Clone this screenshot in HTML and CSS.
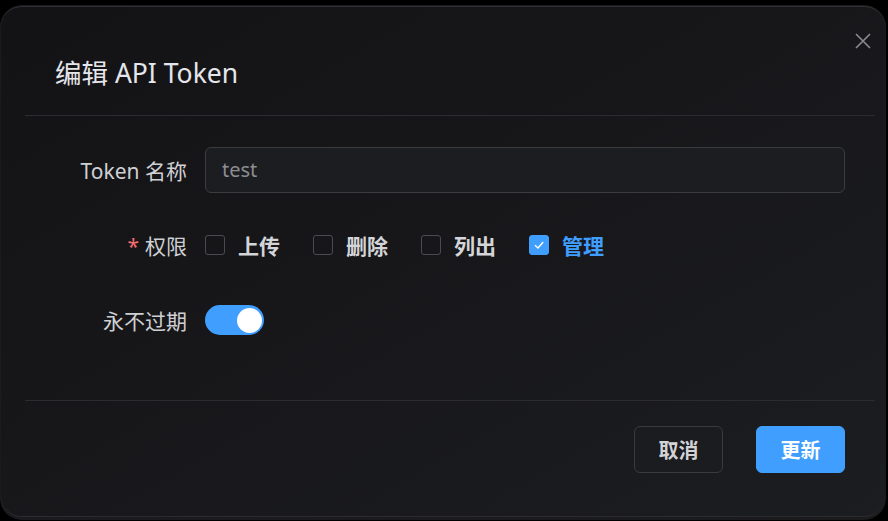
FILE: index.html
```html
<!DOCTYPE html>
<html lang="zh-CN">
<head>
<meta charset="utf-8">
<title>编辑 API Token</title>
<link rel="stylesheet" href="styles.css">
</head>
<body>
<div class="dialog">
  <div class="frame">
    <button class="close" aria-label="关闭">
      <svg width="16" height="16" viewBox="0 0 16 16"><path d="M1 1L15 15M15 1L1 15" stroke="#8b8b90" stroke-width="1.6" fill="none"/></svg>
    </button>
    <div class="header">
      <h2 class="title">编辑 API Token</h2>
    </div>
    <div class="body">
      <div class="row">
        <label class="label">Token 名称</label>
        <div class="control">
          <div class="input">test</div>
        </div>
      </div>
      <div class="row">
        <label class="label"><span class="req">*</span>权限</label>
        <div class="control checks">
          <span class="check"><span class="box"></span><span class="ctext">上传</span></span>
          <span class="check"><span class="box"></span><span class="ctext">删除</span></span>
          <span class="check"><span class="box"></span><span class="ctext">列出</span></span>
          <span class="check on"><span class="box"><svg width="14" height="14" viewBox="0 0 14 14"><path d="M3 7.2L6 10L11.2 4" stroke="#fff" stroke-width="1.4" fill="none"/></svg></span><span class="ctext">管理</span></span>
        </div>
      </div>
      <div class="row">
        <label class="label">永不过期</label>
        <div class="control">
          <span class="switch"><span class="knob"></span></span>
        </div>
      </div>
    </div>
    <div class="footer">
      <button class="btn cancel">取消</button>
      <button class="btn primary">更新</button>
    </div>
  </div>
</div>
</body>
</html>
```
FILE: styles.css
```css
html, body {
  margin: 0;
  padding: 0;
  background: #000;
  width: 888px;
  height: 521px;
  overflow: hidden;
  font-family: "Noto Sans", "Noto Sans CJK SC", sans-serif;
}
.dialog {
  margin-top: 5px;
  width: 886px;
  height: 515px;
  box-sizing: border-box;
  border-radius: 22px;
  background: #1b1b1e;
  padding: 1px 1px 3px 1px;
}
.frame {
  position: relative;
  box-sizing: border-box;
  height: 100%;
  border-radius: 21px;
  border-top: 1px solid #303034;
  border-bottom: 1px solid #2c2c30;
  background: linear-gradient(150deg, #131316 0%, #17171a 45%, #1c1d20 100%);
  padding: 0 10px 0 24px;
  display: flex;
  flex-direction: column;
}
.close {
  position: absolute;
  top: 26px;
  right: 14px;
  width: 16px;
  height: 16px;
  padding: 0;
  border: 0;
  background: none;
  display: flex;
}
.header {
  padding: 50px 30px 26px;
  border-bottom: 1px solid #2c2c30;
}
.title {
  margin: 0;
  font-size: 26.5px;
  line-height: 32px;
  font-weight: 400;
  color: #e4e6eb;
}
.body {
  padding: 31px 0 57px;
  display: flex;
  flex-direction: column;
  gap: 29px;
  border-bottom: 1px solid #2c2c30;
}
.row {
  display: flex;
  align-items: center;
  height: 46px;
}
.label {
  width: 180px;
  box-sizing: border-box;
  padding-right: 18px;
  text-align: right;
  font-size: 21px;
  color: #cfd0d4;
}
.req {
  color: #f56c6c;
  margin-right: 6px;
}
.control {
  flex: 1;
  padding-right: 30px;
  display: flex;
  align-items: center;
}
.input {
  flex: 1;
  height: 46px;
  box-sizing: border-box;
  border: 1px solid #3b3c40;
  border-radius: 6px;
  background: #1c1d20;
  padding-left: 16px;
  font-size: 20px;
  line-height: 44px;
  color: #8c8d92;
}
.checks {
  gap: 0;
}
.check {
  display: flex;
  align-items: center;
  width: 108px;
}
.box {
  width: 20px;
  height: 20px;
  box-sizing: border-box;
  border: 1px solid #4a4b50;
  border-radius: 3px;
  margin-right: 13px;
  display: flex;
  align-items: center;
  justify-content: center;
}
.ctext {
  font-size: 21px;
  font-weight: 600;
  color: #d4d5d9;
}
.check.on .box {
  background: #409eff;
  border-color: #409eff;
}
.check.on .ctext {
  color: #409eff;
}
.switch {
  width: 59px;
  height: 30px;
  border-radius: 15px;
  background: #409eff;
  display: flex;
  align-items: center;
  justify-content: flex-end;
  padding: 0 2px;
  box-sizing: border-box;
}
.knob {
  width: 25px;
  height: 25px;
  border-radius: 50%;
  background: #fff;
}
.footer {
  padding: 25px 30px 0 0;
  display: flex;
  justify-content: flex-end;
  gap: 33px;
}
.btn {
  width: 89px;
  height: 47px;
  box-sizing: border-box;
  border-radius: 6px;
  font-family: "Noto Sans", "Noto Sans CJK SC", sans-serif;
  font-size: 20px;
  font-weight: 600;
  padding: 0;
}
.cancel {
  background: #1b1c1f;
  border: 1px solid #3a3b3f;
  color: #d2d3d7;
}
.primary {
  background: #409eff;
  border: 1px solid #409eff;
  color: #fff;
}
```
